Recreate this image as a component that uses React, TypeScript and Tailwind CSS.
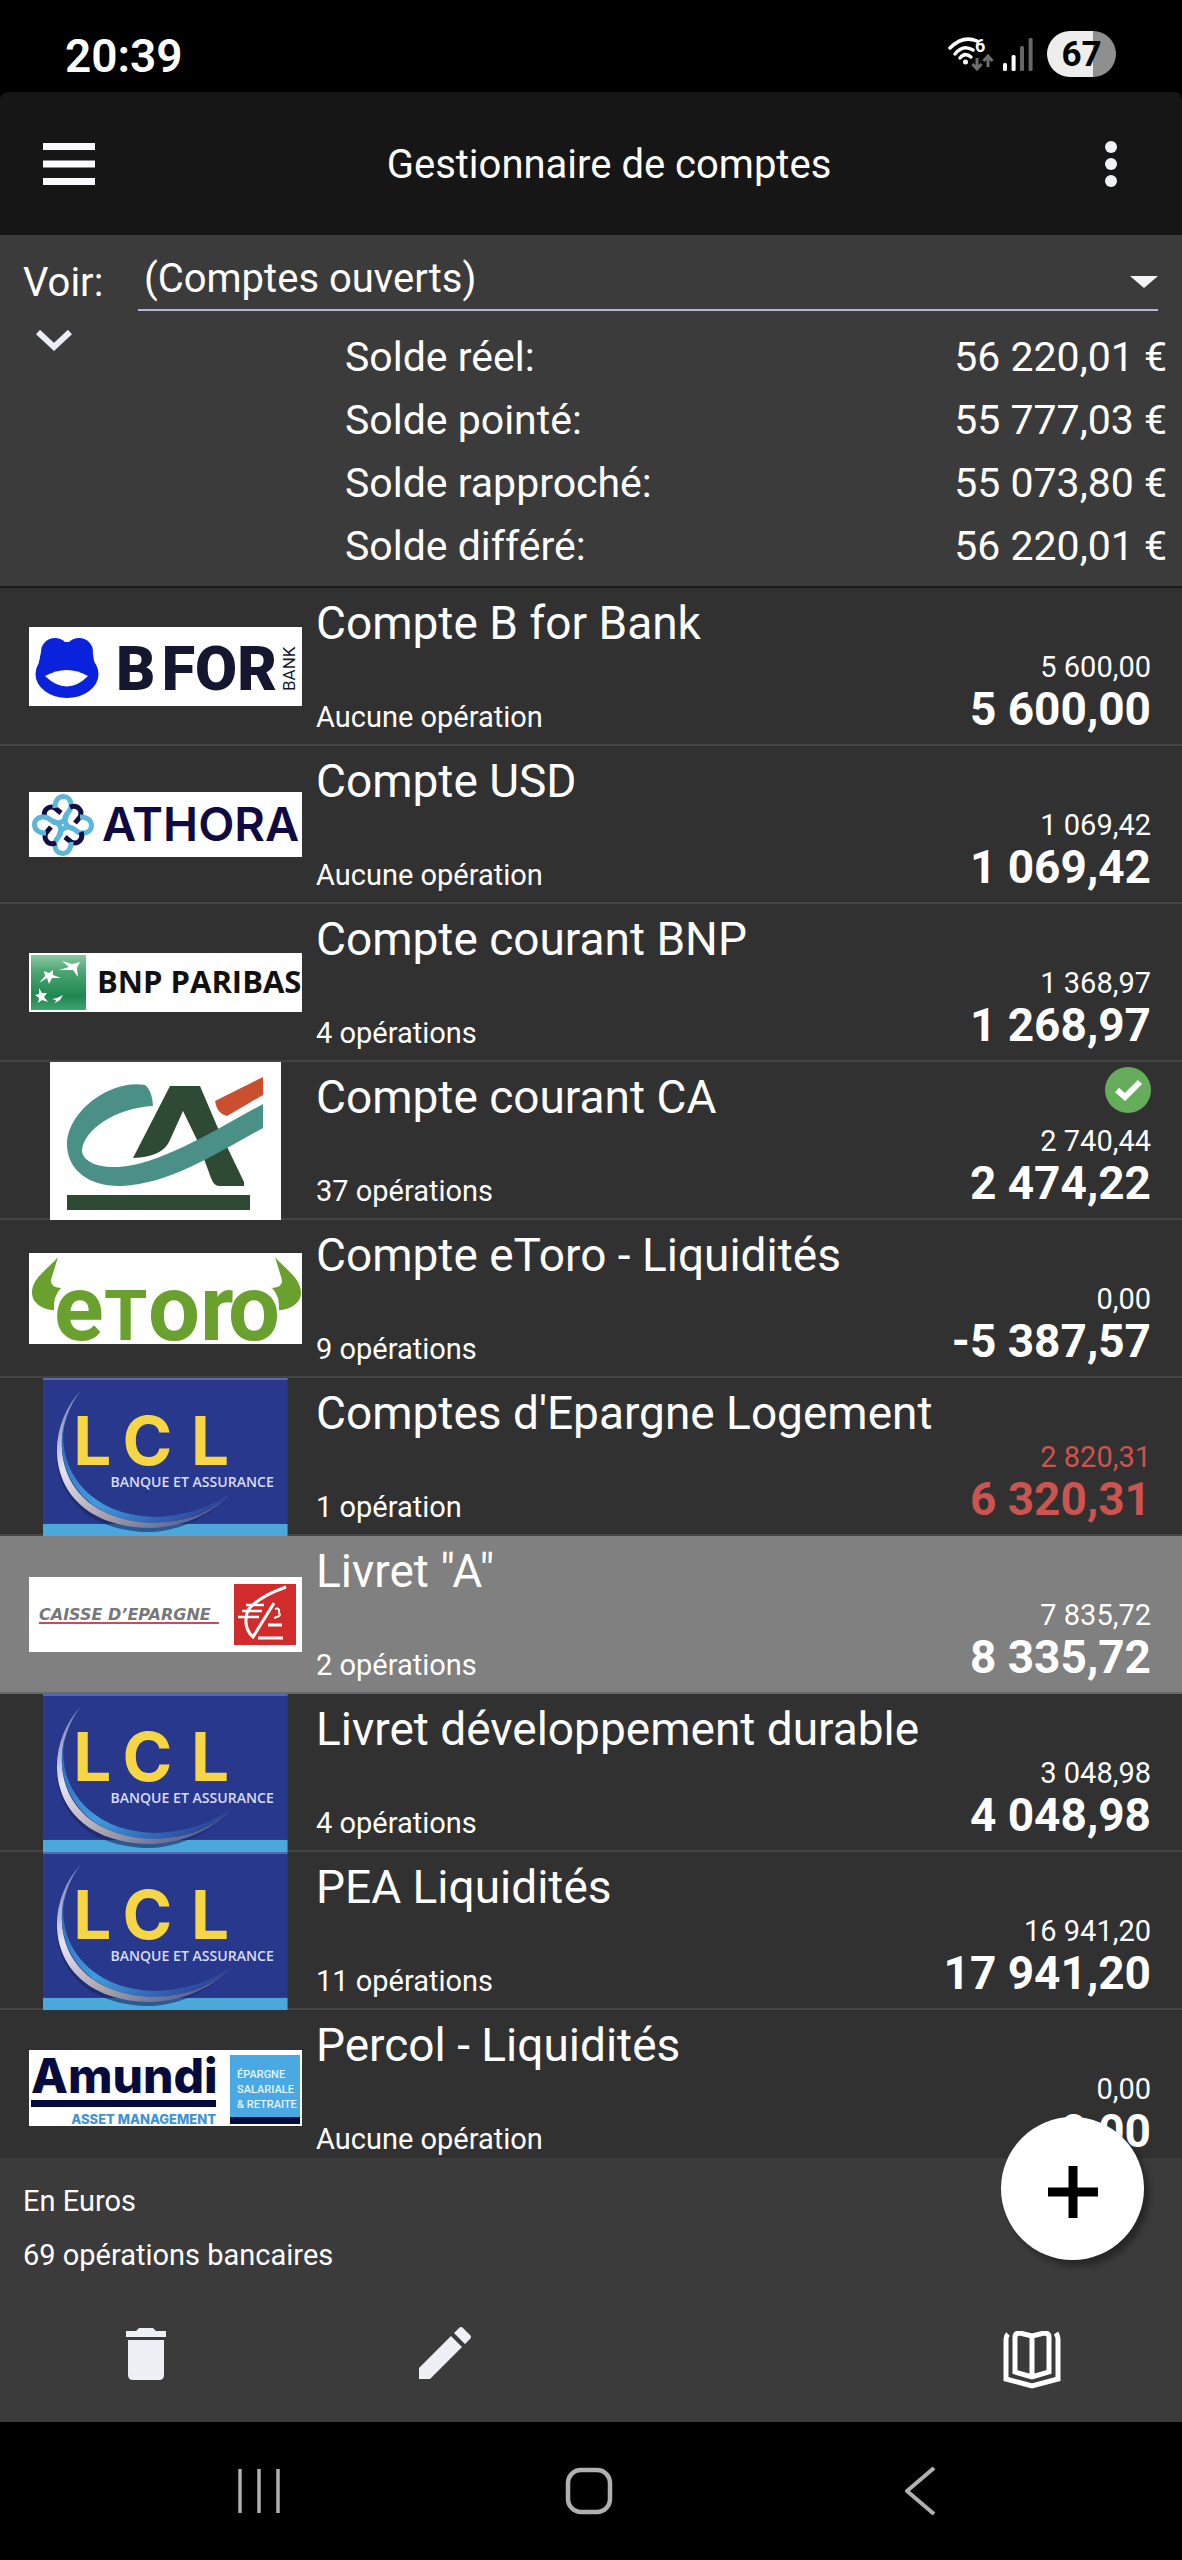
import type { ReactNode } from "react";

function BforLogo() {
  return (
    <svg viewBox="0 0 273 79" className="block w-full overflow-visible bg-white" role="img" aria-label="B for Bank">
      <g fill="#0a22dc">
        <circle cx="26" cy="25" r="14" />
        <circle cx="50" cy="25" r="14" />
        <path d="M28 15H48L64 27L66 40H9L12 25Z" />
        <ellipse cx="38" cy="47" rx="31.5" ry="24" />
      </g>
      <path d="M16 49Q38 37 59 49Q38 70 16 49Z" fill="#fff" />
      <g fill="#15162f" fontFamily="Roboto, sans-serif">
        <text x="87" y="63" fontSize="61" fontWeight="900">B</text>
        <text x="248" y="63" fontSize="61" fontWeight="900" textAnchor="end">FOR</text>
        <text transform="translate(266 64) rotate(-90)" fontSize="17">BANK</text>
      </g>
    </svg>
  );
}

function AthoraLogo() {
  return (
    <svg viewBox="0 0 273 65" className="block w-full overflow-visible bg-white" role="img" aria-label="Athora">
      <g fill="none" strokeWidth="5" transform="translate(34 33)">
        {[0, 90, 180, 270].map((a) => (
          <g key={a} transform={`rotate(${a})`}>
            <path d="M-18 -7C-21 -15 -14 -20 -8 -17L-2 -12" stroke="#150e44" />
            <path d="M-8 -17C-9 -32 9 -32 8 -19C8 -12 1 -12 2 -5Q3 3 11 4" stroke="#5cb6dc" />
          </g>
        ))}
      </g>
      <text x="73" y="49" fontFamily="Inter, sans-serif" fontSize="47" fontWeight="600" fill="#100a42">
        ATHORA
      </text>
    </svg>
  );
}

function BnpLogo() {
  return (
    <svg viewBox="0 0 273 59" className="block w-full overflow-visible bg-white" role="img" aria-label="BNP Paribas">
      <defs>
        <linearGradient id="bnp" x1="0" y1="0" x2="0" y2="1">
          <stop offset="0" stopColor="#8cc7a4" />
          <stop offset="0.3" stopColor="#4ba673" />
          <stop offset="0.75" stopColor="#1f8750" />
          <stop offset="1" stopColor="#3fa370" />
        </linearGradient>
      </defs>
      <rect x="2" y="2" width="55" height="55" fill="url(#bnp)" />
      <g fill="#fff">
        <path d="M33 8L43 11L51 9L48 15L49 24L44 17L30 17L40 14Z" />
        <path d="M15 18L20 20L24 17L24 22L32 25L23 25L20 31L18 25L10 30L16 23Z" />
        <path d="M10 35L13 40L18 40L15 44L19 49L13 47L9 50L10 45L6 42L10 41Z" />
        <path d="M23 46L28 45L34 42L31 47L26 50L27 47Z" />
      </g>
      <text x="68" y="40" fontFamily="'Open Sans', sans-serif" fontSize="31" fontWeight="700" fill="#111">
        BNP PARIBAS
      </text>
    </svg>
  );
}

function CaLogo() {
  return (
    <svg viewBox="0 0 231 158" className="block h-full bg-white" role="img" aria-label="Crédit Agricole">
      <path
        d="M120 24H150L167 64L194 120V124H169Q164 124 161 116L147 78L133 49L120 78Q113 95 83 96Z"
        fill="#2f4a34"
      />
      <path
        d="M103 44Q102 28 95 23C60 17 17 50 17 82C17 110 42 125 72 124C120 122 165 92 213 66V42C165 68 110 103 68 105C45 106 32 98 32 88C34 68 65 46 103 44Z"
        fill="#4b9086"
      />
      <path d="M165 39L213 15V33L177 54Q167 52 165 39Z" fill="#c94f2e" />
      <rect x="17" y="133" width="183" height="15" fill="#2f4a34" />
    </svg>
  );
}

function EtoroLogo() {
  const horn = "M29 4C18 17 3 25 3 40C3 50 14 57 25 57Q24 43 32 35Q21 34 22 27Z";
  return (
    <svg viewBox="0 0 273 91" className="block w-full overflow-visible bg-white" role="img" aria-label="eToro">
      <g fill="#6aa12e">
        <path d={horn} />
        <path d={horn} transform="translate(275 0) scale(-1 1)" />
        <g fontFamily="Roboto, sans-serif" fontWeight="700">
          <text x="25" y="87" fontSize="92">e</text>
          <text x="75" y="87" fontSize="70">T</text>
          <text x="119" y="87" fontSize="92">o</text>
          <text x="171" y="87" fontSize="92">r</text>
          <text x="199" y="87" fontSize="92">o</text>
        </g>
      </g>
    </svg>
  );
}

function LclLogo() {
  return (
    <svg viewBox="0 0 243 157" className="block h-full" role="img" aria-label="LCL">
      <defs>
        <linearGradient id="lcl-silver" x1="0" y1="0" x2="1" y2="1">
          <stop offset="0" stopColor="#5b6aa8" />
          <stop offset="0.3" stopColor="#e6e3f3" />
          <stop offset="0.6" stopColor="#a7a0a8" />
          <stop offset="1" stopColor="#33418c" />
        </linearGradient>
        <linearGradient id="lcl-blue" x1="0" y1="0" x2="1" y2="0.6">
          <stop offset="0" stopColor="#2b62b4" />
          <stop offset="0.5" stopColor="#3f9bde" />
          <stop offset="1" stopColor="#2c4ba0" />
        </linearGradient>
      </defs>
      <rect width="243" height="157" fill="#28388c" />
      <rect width="243" height="2" fill="#5767b0" />
      <rect y="145" width="243" height="12" fill="#4aa8dc" />
      <path d="M38 12C-6 58 4 153 108 153C145 151 172 131 186 115C165 134 140 143 108 142C18 142 -1 62 38 12Z" fill="#18245f" opacity="0.6" />
      <path d="M38 12C-6 58 6 149 108 149C145 148 172 131 186 115C165 135 140 144 108 143C18 142 -1 62 38 12Z" fill="url(#lcl-silver)" />
      <path d="M22 42C8 88 38 143 108 144C140 144 165 134 186 115C160 133 130 138 110 138C44 136 12 88 22 42Z" fill="url(#lcl-blue)" />
      <g fill="#f7d645" fontFamily="Inter, sans-serif" fontWeight="700">
        <text x="30" y="86" fontSize="67">L</text>
        <text x="79" y="86" fontSize="67">C</text>
        <text x="147" y="86" fontSize="67">L</text>
      </g>
      <text x="67" y="108" fontFamily="'Open Sans', sans-serif" fontSize="14" fontWeight="600" fill="#d8dcf2">
        BANQUE ET ASSURANCE
      </text>
    </svg>
  );
}

function CaisseLogo() {
  return (
    <svg viewBox="0 0 273 75" className="block w-full bg-white" role="img" aria-label="Caisse d'Epargne">
      <text x="10" y="43" fontFamily="'DejaVu Sans', sans-serif" fontSize="16" fontWeight="700" fontStyle="italic" fill="#777">
        CAISSE D’EPARGNE
      </text>
      <rect x="10" y="45" width="180" height="2" fill="#d2475a" />
      <rect x="205" y="7" width="62" height="61" fill="#d22b2b" />
      <g fill="none" stroke="#fff" strokeWidth="3">
        <path d="M257 10Q229 20 219 33Q213 50 224 60L245 26" />
        <path d="M217 28H235M213 34H233M209 40H230" strokeWidth="2.5" />
        <path d="M239 48H253M229 61H254" />
        <path d="M246 32Q251 30 250 36Q253 39 245 41" strokeWidth="2" />
      </g>
    </svg>
  );
}

function AmundiLogo() {
  return (
    <svg viewBox="0 0 273 76" className="block w-full overflow-visible bg-white" role="img" aria-label="Amundi Asset Management">
      <g fontFamily="Inter, sans-serif">
        <text x="2" y="43" fontSize="48" fontWeight="800" fill="#050b3c">Amundi</text>
        <rect x="2" y="50" width="185" height="7" fill="#050b3c" />
        <text x="187" y="74" fontSize="13" fontWeight="800" fill="#3f93d2" textAnchor="end">
          ASSET MANAGEMENT
        </text>
      </g>
      <rect x="201" y="5" width="70" height="62" fill="#4aa9e2" />
      <rect x="201" y="67" width="70" height="7" fill="#050b3c" />
      <g fontFamily="Roboto, sans-serif" fontSize="11" fontWeight="500" fill="#e3f4fd">
        <text x="208" y="28">ÉPARGNE</text>
        <text x="208" y="43">SALARIALE</text>
        <text x="208" y="58">&amp; RETRAITE</text>
      </g>
    </svg>
  );
}

type Account = {
  name: string;
  operations: string;
  pointed: string;
  balance: string;
  logo: ReactNode;
  tall?: boolean;
  checked?: boolean;
  alert?: boolean;
  selected?: boolean;
};

const accounts: Account[] = [
  { name: "Compte B for Bank", operations: "Aucune opération", pointed: "5 600,00", balance: "5 600,00", logo: <BforLogo /> },
  { name: "Compte USD", operations: "Aucune opération", pointed: "1 069,42", balance: "1 069,42", logo: <AthoraLogo /> },
  { name: "Compte courant BNP", operations: "4 opérations", pointed: "1 368,97", balance: "1 268,97", logo: <BnpLogo /> },
  { name: "Compte courant CA", operations: "37 opérations", pointed: "2 740,44", balance: "2 474,22", logo: <CaLogo />, tall: true, checked: true },
  { name: "Compte eToro - Liquidités", operations: "9 opérations", pointed: "0,00", balance: "-5 387,57", logo: <EtoroLogo /> },
  { name: "Comptes d'Epargne Logement", operations: "1 opération", pointed: "2 820,31", balance: "6 320,31", logo: <LclLogo />, tall: true, alert: true },
  { name: 'Livret "A"', operations: "2 opérations", pointed: "7 835,72", balance: "8 335,72", logo: <CaisseLogo />, selected: true },
  { name: "Livret développement durable", operations: "4 opérations", pointed: "3 048,98", balance: "4 048,98", logo: <LclLogo />, tall: true },
  { name: "PEA Liquidités", operations: "11 opérations", pointed: "16 941,20", balance: "17 941,20", logo: <LclLogo />, tall: true },
  { name: "Percol - Liquidités", operations: "Aucune opération", pointed: "0,00", balance: "0,00", logo: <AmundiLogo /> },
];

const balances = [
  { label: "Solde réel:", value: "56 220,01 €" },
  { label: "Solde pointé:", value: "55 777,03 €" },
  { label: "Solde rapproché:", value: "55 073,80 €" },
  { label: "Solde différé:", value: "56 220,01 €" },
];

function StatusBar() {
  return (
    <div className="flex h-[92px] shrink-0 items-center justify-between pt-4 pr-[66px] pl-[65px]">
      <span className="pt-1 text-[46px] leading-[52px] font-semibold">20:39</span>
      <div className="flex items-center">
        <svg viewBox="0 0 50 40" className="mr-2 h-10 w-[50px]" role="img" aria-label="Wi-Fi 6">
          <g fill="none" stroke="#fff" strokeWidth="3.5" strokeLinecap="round">
            <path d="M5 14Q18 1 32 7" />
            <path d="M10 20Q18 10 28 16" />
            <path d="M15 24Q20 18 26 23" />
          </g>
          <circle cx="20.5" cy="28" r="2.5" fill="#fff" />
          <text x="30" y="18" fontSize="18" fontWeight="700" fill="#fff">6</text>
          <g fill="none" stroke="#6e6e6e" strokeWidth="3">
            <path d="M32 24V35M27.500 30L32 35L36.500 30" />
            <path d="M43 33V22M38.500 27L43 22L47.500 27" />
          </g>
        </svg>
        <svg viewBox="0 0 30 33" className="mr-3.5 h-[33px] w-[30px]" role="img" aria-label="Signal">
          <rect x="0" y="25" width="4" height="8" rx="1.500" fill="#fff" />
          <rect x="8.600" y="17" width="4" height="16" rx="1.500" fill="#fff" />
          <rect x="17" y="8" width="4" height="25" rx="1.500" fill="#666" />
          <rect x="25.600" y="0" width="4" height="33" rx="1.500" fill="#666" />
        </svg>
        <span className="flex h-[46px] w-[69px] items-center justify-center rounded-full bg-linear-to-r from-[#ededed] from-67% to-[#8f8f8f] to-67% pt-0.5 text-[35px] font-bold text-black">
          67
        </span>
      </div>
    </div>
  );
}

function AccountRow({ account }: { account: Account }) {
  return (
    <li
      className={
        account.selected
          ? "flex h-[158px] border-b-2 border-[#6a6a6a] bg-[#808080]"
          : "flex h-[158px] border-b-2 border-[#434343]"
      }
    >
      <div className={account.tall ? "ml-[29px] -mb-0.5 flex w-[273px] justify-center" : "ml-[29px] flex w-[273px] items-center"}>
        {account.logo}
      </div>
      <div className="ml-3.5 flex min-w-0 flex-1 flex-col justify-between pt-2 pb-[10px]">
        <h2 className="text-[46px] leading-[54px] whitespace-nowrap">{account.name}</h2>
        <p className="text-[29px] leading-[34px]">{account.operations}</p>
      </div>
      <div
        className={
          account.alert
            ? "flex flex-col items-end justify-end pr-[31px] pb-[9px] text-[#cb5450]"
            : "flex flex-col items-end justify-end pr-[31px] pb-[9px]"
        }
      >
        {account.checked && (
          <svg viewBox="0 0 46 46" className="mb-3 size-[46px]" role="img" aria-label="Pointé">
            <circle cx="23" cy="23" r="23" fill="#66ad5b" />
            <path d="M12 23L20 30L35 15" fill="none" stroke="#fff" strokeWidth="6" />
          </svg>
        )}
        <span className="text-[29px] leading-8">{account.pointed}</span>
        <strong className="text-[46px] leading-[52px] font-bold">{account.balance}</strong>
      </div>
    </li>
  );
}

export default function App() {
  return (
    <div className="flex h-screen flex-col bg-black font-[Roboto,sans-serif] text-white">
      <StatusBar />

      <header className="flex h-[143px] shrink-0 items-center justify-between rounded-t-lg bg-[#161616] pr-[59px] pl-[43px]">
        <button type="button" aria-label="Menu">
          <svg viewBox="0 0 52 42" className="h-[42px] w-[52px]" fill="#fafaff">
            <path d="M0 0H52V7H0ZM0 17.500H52V24.500H0ZM0 35H52V42H0Z" />
          </svg>
        </button>
        <h1 className="pt-0.5 pl-6 text-[40px] leading-[48px]">Gestionnaire de comptes</h1>
        <button type="button" aria-label="Plus d'options">
          <svg viewBox="0 0 24 48" className="h-12 w-6" fill="#f0f2f7">
            <circle cx="12" cy="7" r="6" />
            <circle cx="12" cy="24" r="6" />
            <circle cx="12" cy="41" r="6" />
          </svg>
        </button>
      </header>

      <section className="flex shrink-0 flex-col border-b-2 border-[#1c1c1c] bg-[#3b3b3b] pb-2">
        <div className="flex items-center pt-3.5 pr-6 pl-[23px]">
          <label htmlFor="view" className="w-[115px] pt-1.5 text-[40px] leading-[48px]">
            Voir:
          </label>
          <div className="relative flex-1">
            <select
              id="view"
              className="h-[62px] w-full appearance-none border-b-2 border-[#b0b8d4] bg-transparent pl-1.5 text-[40px] leading-[48px] outline-none"
            >
              <option>(Comptes ouverts)</option>
            </select>
            <svg viewBox="0 0 28 12" className="pointer-events-none absolute top-[27px] right-0 h-3 w-7" fill="#f4f4f8">
              <path d="M0 0H28L14 12Z" />
            </svg>
          </div>
        </div>
        <div className="flex items-start pt-[15px] pr-[15px] pl-[36px]">
          <button type="button" aria-label="Replier les soldes" className="mt-1 w-[309px]">
            <svg viewBox="0 0 36 22" className="h-[22px] w-9" fill="none" stroke="#eceef5" strokeWidth="6">
              <path d="M2 2L18 17L34 2" />
            </svg>
          </button>
          <dl className="flex-1 text-[41px] leading-[63px]">
            {balances.map((b) => (
              <div key={b.label} className="flex justify-between">
                <dt>{b.label}</dt>
                <dd>{b.value}</dd>
              </div>
            ))}
          </dl>
        </div>
      </section>

      <ul className="min-h-0 flex-1 overflow-y-auto bg-[#313131] [scrollbar-width:none]">
        {accounts.map((a) => (
          <AccountRow key={a.name} account={a} />
        ))}
      </ul>

      <footer className="relative flex shrink-0 flex-col bg-[#3b3b3b] px-[23px] pt-4 pb-0.5 text-[29px] leading-[54px]">
        <p>En Euros</p>
        <p>69 opérations bancaires</p>
        <button
          type="button"
          aria-label="Ajouter"
          className="absolute -top-[41px] right-[38px] flex size-[143px] items-center justify-center rounded-full bg-white shadow-[5px_6px_6px_rgba(0,0,0,0.35)]"
        >
          <svg viewBox="0 0 50 52" className="mt-1.5 h-[52px] w-[50px]" fill="#000">
            <path d="M20.500 0H29.500V21.500H50V30.500H29.500V52H20.500V30.500H0V21.500H20.500Z" />
          </svg>
        </button>
      </footer>

      <nav aria-label="Actions" className="flex h-[138px] shrink-0 bg-[#3b3b3b] pt-[42px] pr-[121px] pl-[119px]">
        <button type="button" aria-label="Supprimer" className="h-[54px]">
          <svg viewBox="0 0 54 54" className="size-[54px]" fill="#eff0f5">
            <path d="M7 5H17L20 2H34L37 5H47V11H7ZM9 14H45V49Q45 54 40 54H14Q9 54 9 49Z" />
          </svg>
        </button>
        <button type="button" aria-label="Modifier" className="ml-[245px] h-[54px]">
          <svg viewBox="0 0 54 54" className="size-[54px]" fill="#eff0f5">
            <path d="M1 42L33 10L44 21L12 53H1ZM36 7L41 2Q43 0 45 2L52 9Q54 11 52 13L47 18Z" />
          </svg>
        </button>
        <button type="button" aria-label="Registre" className="mt-[5px] ml-auto h-[58px]">
          <svg viewBox="0 0 58 58" className="size-[58px]" fill="none" stroke="#fff" strokeWidth="5">
            <path d="M29 5L17 2Q12 2 12 6V41L29 46L46 41V6Q46 2 41 2L29 5V46" />
            <path d="M5 3Q3 5 3 8V48L29 55L55 48V8Q55 5 53 2" />
          </svg>
        </button>
      </nav>

      <nav aria-label="Navigation" className="flex h-[138px] shrink-0 items-center justify-between pr-[239px] pl-[235px]">
        <button type="button" aria-label="Applications récentes">
          <svg viewBox="0 0 48 48" className="size-12" fill="none" stroke="#b0b0b0" strokeWidth="3.500">
            <path d="M5 2V46M24 2V46M43 2V46" />
          </svg>
        </button>
        <button type="button" aria-label="Accueil">
          <svg viewBox="0 0 48 48" className="size-12" fill="none" stroke="#b0b0b0" strokeWidth="4.500">
            <rect x="3" y="3" width="42" height="42" rx="13" />
          </svg>
        </button>
        <button type="button" aria-label="Retour">
          <svg viewBox="0 0 48 48" className="size-12" fill="none" stroke="#b0b0b0" strokeWidth="4" strokeLinejoin="round">
            <path d="M39 1L12 24L39 47" />
          </svg>
        </button>
      </nav>
    </div>
  );
}
